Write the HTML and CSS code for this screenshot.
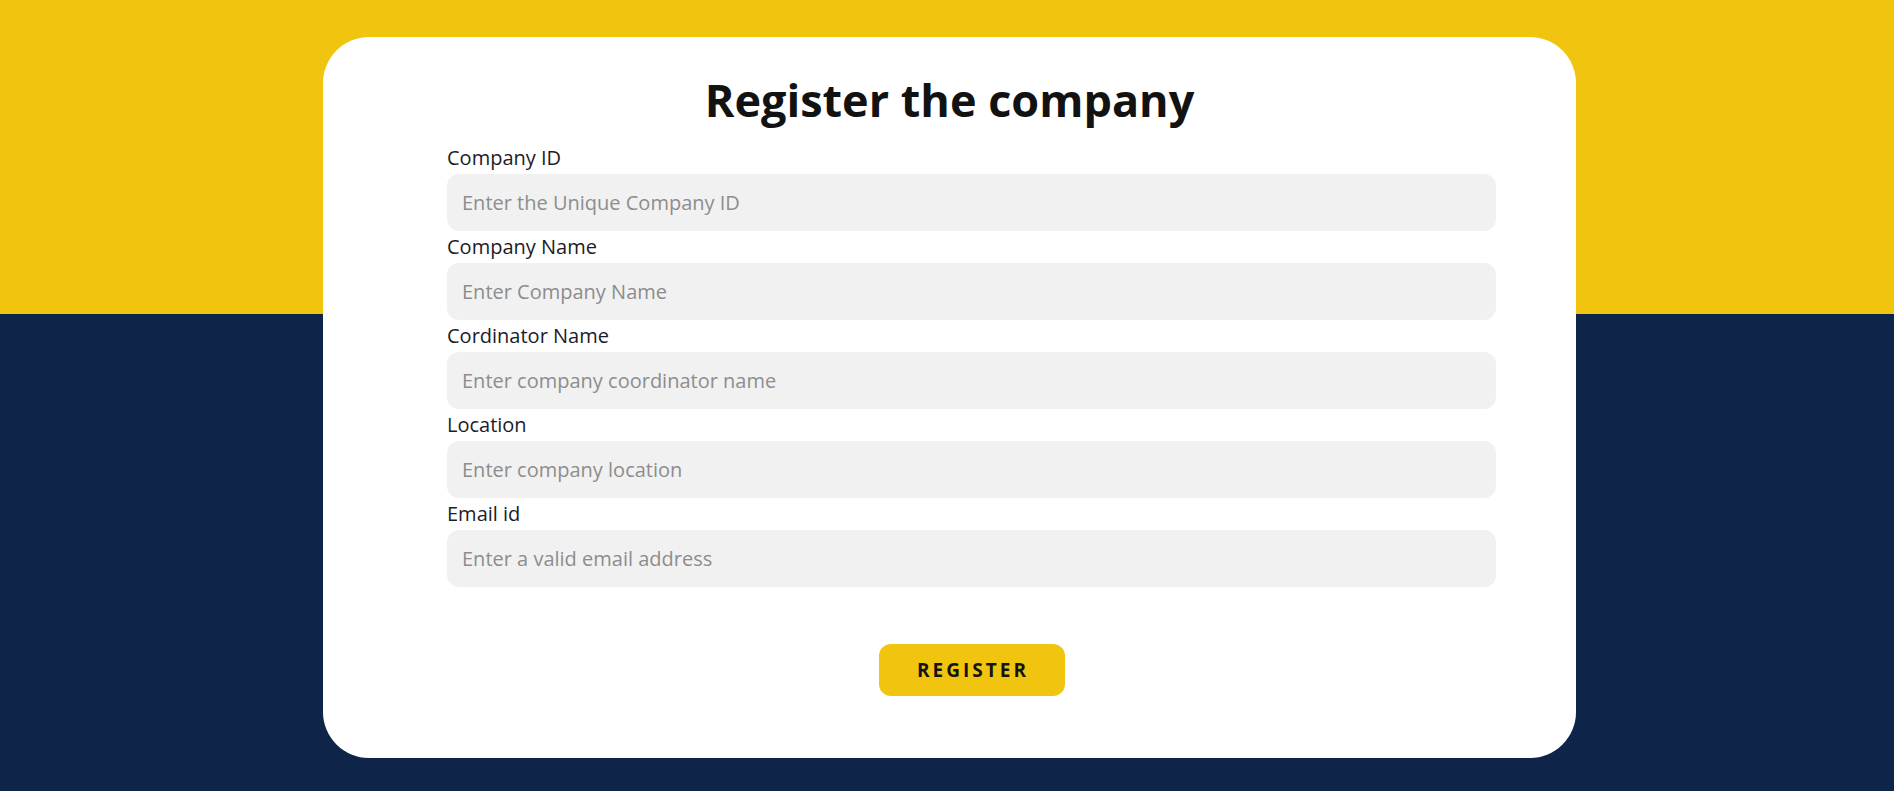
FILE: index.html
```html
<!DOCTYPE html>
<html lang="en">
<head>
<meta charset="utf-8">
<title>Register the company</title>
<link rel="stylesheet" href="styles.css">
</head>
<body>
<div class="page">
  <div class="card">
    <h1 class="title">Register the company</h1>
    <form class="form">
      <label class="label" for="cid">Company ID</label>
      <input class="input" id="cid" type="text" placeholder="Enter the Unique Company ID">
      <label class="label" for="cname">Company Name</label>
      <input class="input" id="cname" type="text" placeholder="Enter Company Name">
      <label class="label" for="coord">Cordinator Name</label>
      <input class="input" id="coord" type="text" placeholder="Enter company coordinator name">
      <label class="label" for="loc">Location</label>
      <input class="input" id="loc" type="text" placeholder="Enter company location">
      <label class="label" for="email">Email id</label>
      <input class="input" id="email" type="email" placeholder="Enter a valid email address">
      <div class="actions">
        <button class="btn" type="button">Register</button>
      </div>
    </form>
  </div>
</div>
</body>
</html>
```

FILE: styles.css
```css
* { box-sizing: border-box; }
html, body { margin: 0; padding: 0; }
body {
  min-height: 791px;
  background: linear-gradient(to bottom, #f1c40f 0, #f1c40f 314px, #0e2549 314px, #0e2549 100%);
  font-family: "Open Sans", "Noto Sans", sans-serif;
}
.page {
  padding-top: 37px;
  padding-left: 323px;
}
.card {
  width: 1253px;
  height: 721px;
  background: #ffffff;
  border-radius: 46px;
  padding-top: 32px;
}
.title {
  margin: 0;
  text-align: center;
  font-size: 45px;
  font-weight: 700;
  line-height: 61px;
  color: #121212;
}
.form {
  display: flex;
  flex-direction: column;
  padding: 14px 80px 0 124px;
}
.label {
  display: block;
  font-size: 20px;
  line-height: 27px;
  color: #1c1c28;
  margin-bottom: 3px;
}
.input {
  display: block;
  width: 100%;
  height: 57px;
  border: none;
  outline: none;
  border-radius: 12px;
  background: #f1f1f1;
  padding: 0 15px;
  font-family: "Open Sans", "Noto Sans", sans-serif;
  font-size: 20px;
  color: #222;
  margin-bottom: 2px;
}
.input::placeholder { color: #8d8d8d; }
.actions {
  display: flex;
  justify-content: center;
  padding-top: 55px;
}
.btn {
  width: 186px;
  height: 52px;
  border: none;
  border-radius: 12px;
  background: #f1c40f;
  font-family: "Open Sans", "Noto Sans", sans-serif;
  font-size: 19px;
  font-weight: 700;
  letter-spacing: 3px;
  text-transform: uppercase;
  color: #141414;
  padding: 0 0 0 3px;
}
```
